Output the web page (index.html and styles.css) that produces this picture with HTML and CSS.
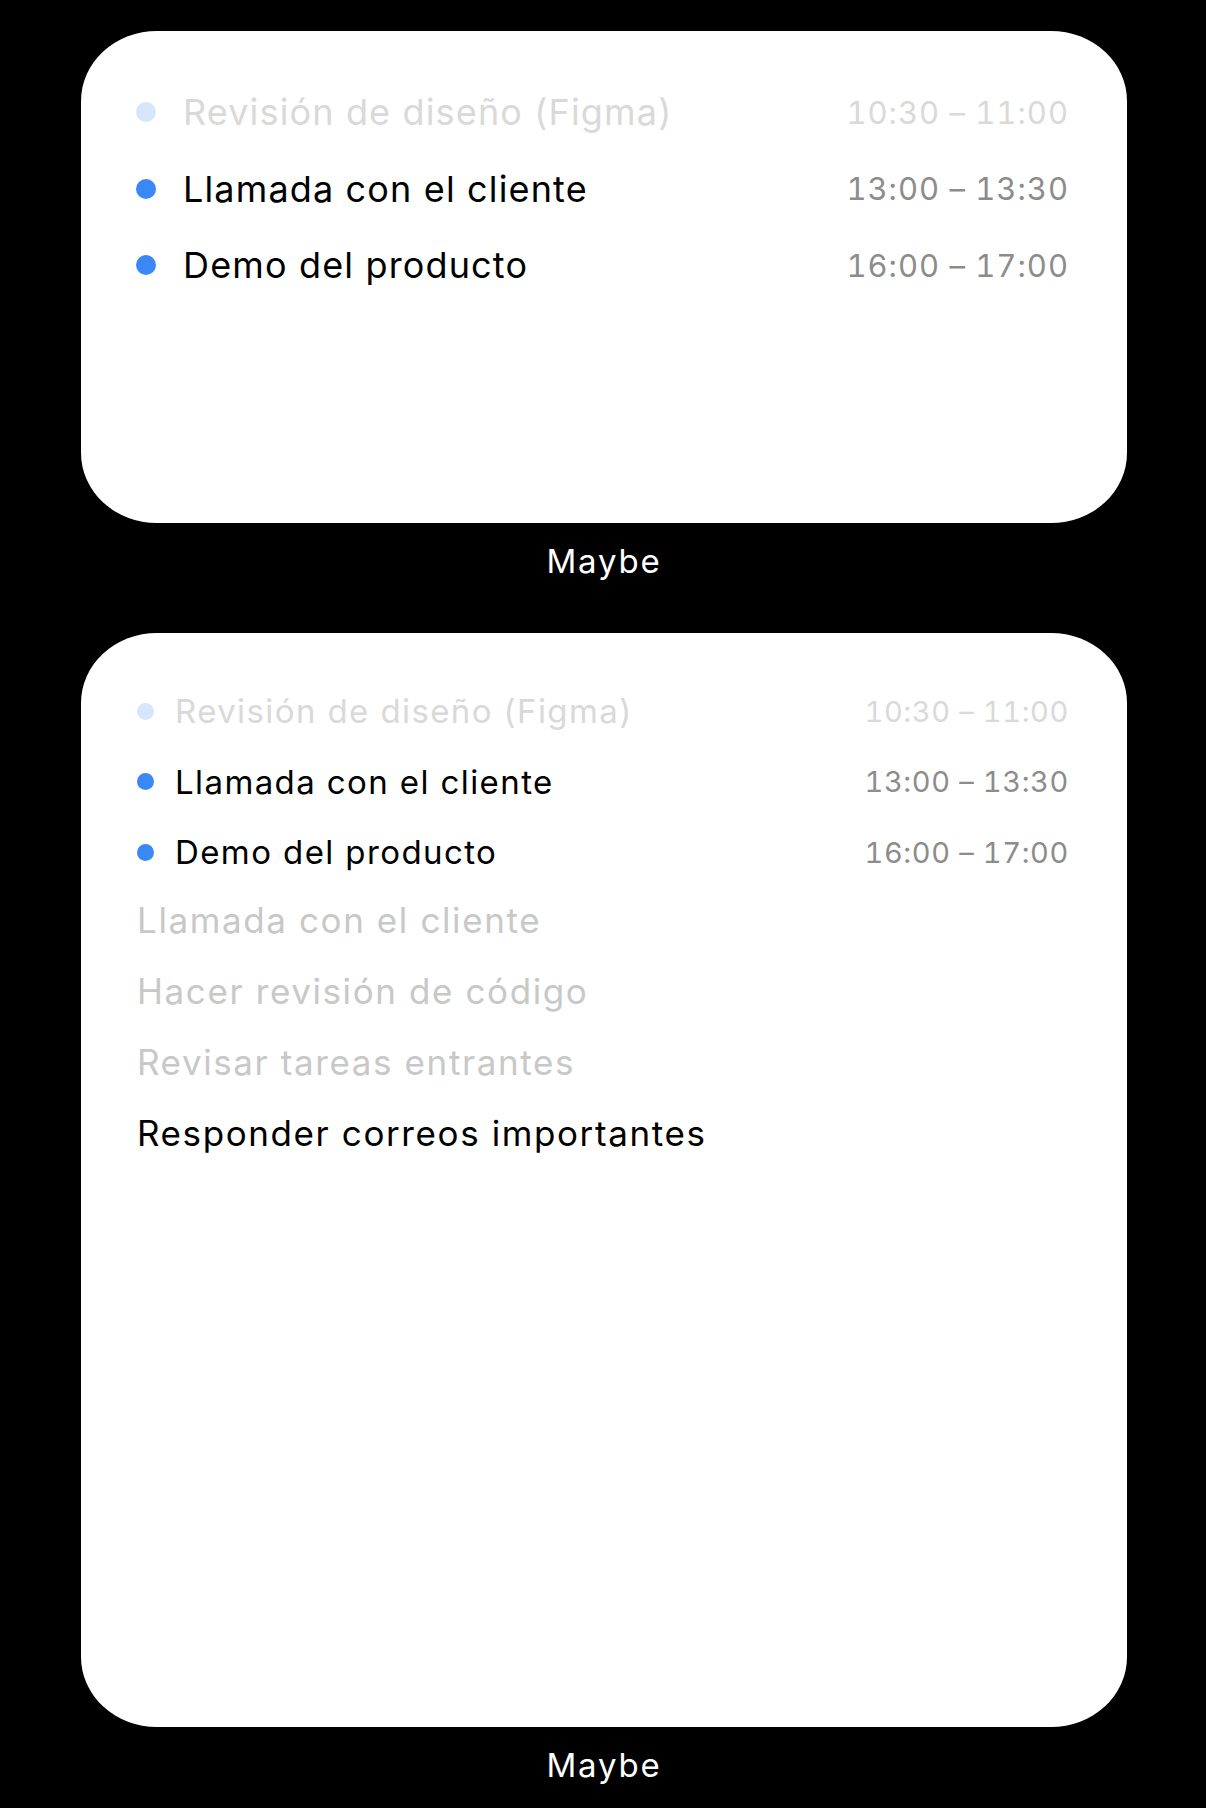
FILE: index.html
```html
<!DOCTYPE html>
<html lang="es">
<head>
    <meta charset="UTF-8">
    <meta name="viewport" content="width=device-width, initial-scale=1.0">
    <title>Widgets</title>
    <link rel="stylesheet" href="styles.css">
</head>
<body>
    <div class="widget">
        <div class="card card-medium">
            <ul class="events">
                <li class="event past">
                    <span class="dot"></span>
                    <span class="title">Revisión de diseño (Figma)</span>
                    <span class="time">10:30 – 11:00</span>
                </li>
                <li class="event">
                    <span class="dot"></span>
                    <span class="title">Llamada con el cliente</span>
                    <span class="time">13:00 – 13:30</span>
                </li>
                <li class="event">
                    <span class="dot"></span>
                    <span class="title">Demo del producto</span>
                    <span class="time">16:00 – 17:00</span>
                </li>
            </ul>
        </div>
        <p class="widget-label">Maybe</p>
    </div>

    <div class="widget">
        <div class="card card-large">
            <ul class="events compact">
                <li class="event past">
                    <span class="dot"></span>
                    <span class="title">Revisión de diseño (Figma)</span>
                    <span class="time">10:30 – 11:00</span>
                </li>
                <li class="event">
                    <span class="dot"></span>
                    <span class="title">Llamada con el cliente</span>
                    <span class="time">13:00 – 13:30</span>
                </li>
                <li class="event">
                    <span class="dot"></span>
                    <span class="title">Demo del producto</span>
                    <span class="time">16:00 – 17:00</span>
                </li>
            </ul>
            <ul class="tasks">
                <li class="task done">Llamada con el cliente</li>
                <li class="task done">Hacer revisión de código</li>
                <li class="task done">Revisar tareas entrantes</li>
                <li class="task">Responder correos importantes</li>
            </ul>
        </div>
        <p class="widget-label">Maybe</p>
    </div>
</body>
</html>
```

FILE: styles.css
```css
* {
    margin: 0;
    padding: 0;
    box-sizing: border-box;
}

body {
    background: #000;
    font-family: 'Inter', 'Noto Sans', sans-serif;
    padding-top: 31px;
}

ul {
    list-style: none;
}

.widget {
    width: 1046px;
    margin-left: 81px;
}

.widget + .widget {
    margin-top: 34px;
}

.card {
    background: #fff;
    border-radius: 76px / 70px;
    padding: 43px 58px 0 55px;
}

.card-medium {
    height: 492px;
}

.card-large {
    height: 1094px;
}

.widget-label {
    color: #fff;
    font-size: 33px;
    line-height: 76px;
    text-align: center;
    letter-spacing: 1.8px;
}

.event {
    display: flex;
    align-items: center;
    height: 76.5px;
}

.dot {
    width: 20px;
    height: 20px;
    border-radius: 50%;
    background: #3a87f6;
    flex-shrink: 0;
}

.title {
    flex: 1;
    margin-left: 27px;
    font-size: 36px;
    color: #000;
    letter-spacing: 1.15px;
}

.time {
    font-size: 31px;
    color: #8c8c8c;
    font-variant-numeric: tabular-nums;
    letter-spacing: 1px;
}

.event.past .dot {
    background: #d6e6fb;
}

.event.past .title,
.event.past .time {
    color: #d9d9d9;
}

/* smaller rows in the large widget */
.compact .event {
    height: 70.5px;
}

.compact .dot {
    width: 17px;
    height: 17px;
    margin-left: 1px;
}

.compact .title {
    margin-left: 21px;
    font-size: 33px;
    letter-spacing: 1.4px;
}

.compact .time {
    font-size: 29px;
    letter-spacing: 0.65px;
}

.tasks {
    margin-top: -3px;
    padding-left: 1px;
}

.task {
    display: flex;
    align-items: center;
    height: 71px;
    font-size: 35px;
    color: #000;
    letter-spacing: 1.6px;
}

.task.done {
    color: #c8c8c8;
}
```
